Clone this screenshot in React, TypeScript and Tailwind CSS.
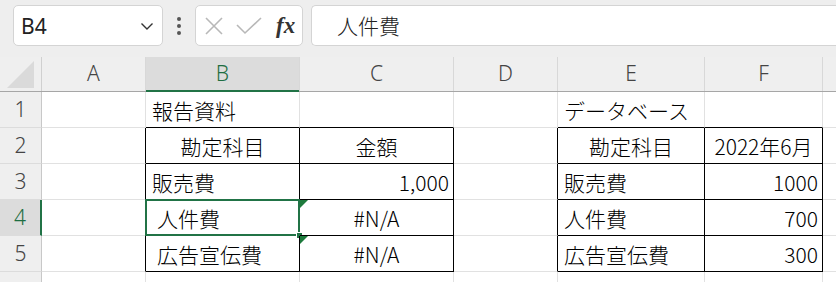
import React from "react";

const cols = ["A", "B", "C", "D", "E", "F"];
const colW = ["w-[104px]", "w-[154px]", "w-[154px]", "w-[104px]", "w-[147px]", "w-[118px]"];

type Cell = {
  text?: string;
  align?: "left" | "center" | "right";
  indent?: boolean;
  right?: boolean; // black right border
  bottom?: boolean; // black bottom border
};

const rows: Cell[][] = [
  [
    { right: false },
    { text: "報告資料", bottom: true },
    { bottom: true },
    {},
    { text: "データベース", bottom: true },
    { bottom: true },
  ],
  [
    { right: true },
    { text: "勘定科目", align: "center", right: true, bottom: true },
    { text: "金額", align: "center", right: true, bottom: true },
    { right: true },
    { text: "勘定科目", align: "center", right: true, bottom: true },
    { text: "2022年6月", align: "center", right: true, bottom: true },
  ],
  [
    { right: true },
    { text: "販売費", right: true, bottom: true },
    { text: "1,000", align: "right", right: true, bottom: true },
    { right: true },
    { text: "販売費", right: true, bottom: true },
    { text: "1000", align: "right", right: true, bottom: true },
  ],
  [
    { right: true },
    { text: "人件費", indent: true, right: true, bottom: true },
    { text: "#N/A", align: "center", right: true, bottom: true },
    { right: true },
    { text: "人件費", right: true, bottom: true },
    { text: "700", align: "right", right: true, bottom: true },
  ],
  [
    { right: true },
    { text: "広告宣伝費", indent: true, right: true, bottom: true },
    { text: "#N/A", align: "center", right: true, bottom: true },
    { right: true },
    { text: "広告宣伝費", right: true, bottom: true },
    { text: "300", align: "right", right: true, bottom: true },
  ],
];

function Toolbar() {
  return (
    <div className="h-[57px] bg-[#eeeeee] flex items-start pt-[5px] pl-[13px]">
      <div className="w-[150px] h-[41px] bg-white border border-[#d4d4d4] rounded-[5px] flex items-center pl-[7px] pr-[8px]">
        <span className="text-[21px] text-[#222] font-['Noto_Sans',sans-serif] leading-none pt-[2px]">B4</span>
        <svg className="ml-auto" width="14" height="14" viewBox="0 0 14 14">
          <path d="M1.5 4.5 L7 10 L12.5 4.5" fill="none" stroke="#333" strokeWidth="1.4" />
        </svg>
      </div>
      <div className="w-[32px] h-[41px] flex flex-col items-center justify-center gap-[3px]">
        <div className="w-[4px] h-[4px] bg-[#555] rounded-full" />
        <div className="w-[4px] h-[4px] bg-[#555] rounded-full" />
        <div className="w-[4px] h-[4px] bg-[#555] rounded-full" />
      </div>
      <div className="w-[108px] h-[41px] bg-white border border-[#d4d4d4] rounded-[5px] flex items-center pl-[8px]">
        <svg width="20" height="20" viewBox="0 0 20 20">
          <path d="M2 2 L18 18 M18 2 L2 18" stroke="#b8b8b8" strokeWidth="1.6" fill="none" />
        </svg>
        <svg className="ml-[12px]" width="26" height="20" viewBox="0 0 26 20">
          <path d="M1 9 L9 17 L25 2" stroke="#b8b8b8" strokeWidth="1.6" fill="none" />
        </svg>
        <span className="ml-[14px] text-[23px] italic font-bold text-[#333] font-['Liberation_Serif',serif] leading-none">
          fx
        </span>
      </div>
      <div className="ml-[8px] flex-1 h-[41px] bg-white border border-[#d4d4d4] border-r-0 rounded-l-[5px] flex items-center pl-[25px]">
        <span className="text-[21px] font-light text-[#222] font-['Noto_Sans_CJK_JP',sans-serif] leading-none">人件費</span>
      </div>
    </div>
  );
}

function Header() {
  return (
    <div className="flex h-[35px] bg-[#efefef] border-b border-[#a6a6a6] font-['Noto_Sans',sans-serif] font-light text-[21px] text-[#444]">
      <div className="w-[42px] shrink-0 flex items-end justify-center pb-[3px] border-r border-[#d0d0d0]">
        <div className="w-[27px] h-[27px] bg-[#dadada] [clip-path:polygon(100%_0,100%_100%,0_100%)]" />
      </div>
      {cols.map((c, i) => (
        <div
          key={c}
          className={`${colW[i]} shrink-0 flex items-center justify-center border-r border-[#d8d8d8] ${
            c === "B" ? "bg-[#dcdcdc] text-[#1e6e42] relative" : ""
          }`}
        >
          {c}
          {c === "B" && <div className="absolute left-0 right-0 -bottom-[1px] h-[2px] bg-[#217346]" />}
        </div>
      ))}
      <div className="flex-1" />
    </div>
  );
}

function Row({ n, cells }: { n: number; cells: Cell[] }) {
  const sel = n === 4;
  return (
    <div className="flex h-[36px]">
      <div
        className={`w-[42px] shrink-0 flex items-center justify-center border-b border-[#dcdcdc] font-['Noto_Sans',sans-serif] font-light text-[21px] ${
          sel
            ? "bg-[#dcdcdc] text-[#1e6e42] border-r-2 border-r-[#217346]"
            : "bg-[#efefef] text-[#444] border-r border-r-[#c8c8c8]"
        }`}
      >
        {n}
      </div>
      {cells.map((c, i) => {
        const align =
          c.align === "center" ? "justify-center" : c.align === "right" ? "justify-end pr-[4px]" : c.indent ? "pl-[11px]" : "pl-[6px]";
        const isB4 = sel && i === 1;
        const errTri = (n === 4 || n === 5) && i === 2;
        return (
          <div
            key={i}
            className={`${colW[i]} shrink-0 relative flex items-center ${align} border-r border-b ${
              c.right ? "border-r-black" : "border-r-[#e1e1e1]"
            } ${c.bottom ? "border-b-black" : "border-b-[#e1e1e1]"}`}
          >
            <span className="text-[21px] font-light leading-none text-black font-['Noto_Sans_CJK_JP',sans-serif] pt-[1px]">
              {c.text}
            </span>
            {errTri && (
              <div className="absolute left-0 top-0 w-[8px] h-[8px] bg-[#1d7a3c] [clip-path:polygon(0_0,100%_0,0_100%)]" />
            )}
            {isB4 && (
              <>
                <div className="absolute -left-[1px] -top-[1px] right-[-1px] bottom-[-1px] border-2 border-[#217346]" />
                <div className="absolute -right-[4px] -bottom-[4px] w-[7px] h-[7px] bg-[#217346] border border-white" />
              </>
            )}
          </div>
        );
      })}
      <div className="flex-1 border-b border-[#e1e1e1]" />
    </div>
  );
}

export default function App() {
  return (
    <div className="w-[836px] h-[282px] overflow-hidden bg-white">
      <Toolbar />
      <Header />
      {rows.map((r, i) => (
        <Row key={i} n={i + 1} cells={r} />
      ))}
      <div className="flex h-[10px]">
        <div className="w-[42px] bg-[#efefef] border-r border-[#c8c8c8]" />
        {colW.map((w, i) => (
          <div key={i} className={`${w} shrink-0 border-r border-[#e1e1e1]`} />
        ))}
      </div>
    </div>
  );
}
